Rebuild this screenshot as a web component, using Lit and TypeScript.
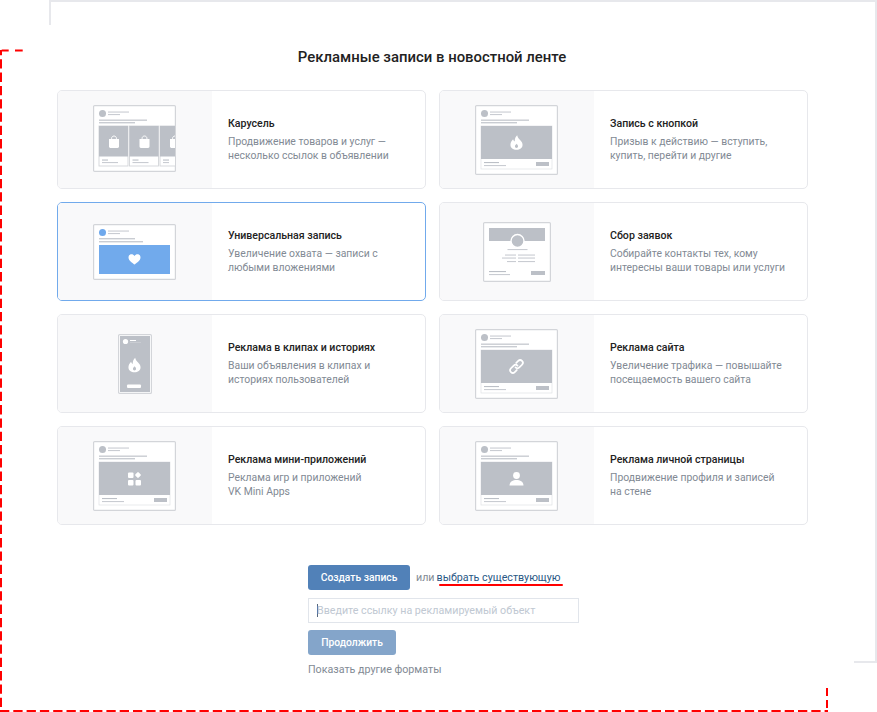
import { LitElement, html, css, svg } from "lit";
import { customElement } from "lit/decorators.js";

const G = "#bcc0c7";
const L = "#c9ccd2";
const B = "#d3d5d9";
const flame = (x: number, y: number, s = 1.12) => svg`<path transform="translate(${x} ${y}) scale(${s})" fill="#fff" fill-rule="evenodd" d="M0.6 -6.5C1 -4.5 2 -3.6 3.2 -2.3C4.6 -0.9 5.4 0.4 5.4 2C5.4 4.9 3 6.5 0 6.5C-3 6.5 -5.4 4.9 -5.4 2C-5.4 0 -4.4 -1.6 -3 -3C-2.8 -2 -2.4 -1.4 -1.6 -1C-1.6 -3.4 -0.8 -5.2 0.6 -6.5ZM0.2 1.2C-0.7 2 -1.4 2.700 -1.4 3.500C-1.4 4.300 -0.7 4.800 0 4.800C0.7 4.800 1.400 4.300 1.400 3.500C1.400 2.700 0.8 2 0.2 1.2Z"/>`;
const heart = (x: number, y: number) => svg`<path transform="translate(${x} ${y})" fill="#fff" d="M0 5.4C-1 4.7 -6 1.8 -6 -1.6C-6 -3.5 -4.6 -4.7 -3 -4.7C-1.8 -4.7 -0.7 -4.1 0 -3C0.7 -4.1 1.8 -4.7 3 -4.7C4.6 -4.7 6 -3.5 6 -1.6C6 1.8 1 4.7 0 5.4Z"/>`;
const link = (x: number, y: number) => svg`<g transform="translate(${x} ${y}) rotate(-45) scale(.92)" fill="none" stroke="#fff" stroke-width="1.900" stroke-linecap="round"><path d="M-2.500 2.900H-5.600A2.900 2.900 0 0 1 -5.600 -2.900H-1.400A2.900 2.900 0 0 1 1.500 0"/><path d="M2.500 -2.900H5.600A2.900 2.900 0 0 1 5.600 2.900H1.400A2.900 2.900 0 0 1 -1.500 0"/></g>`;
const apps = (x: number, y: number) => svg`<g transform="translate(${x} ${y + 0.5})" fill="#fff"><rect x="-6.5" y="-6.5" width="5.5" height="5.5" rx="1"/><rect x="1" y="1" width="5.5" height="5.5" rx="1"/><rect x="-6.5" y="1" width="5.5" height="5.5" rx="1"/><rect x="1.2" y="-6.3" width="4.6" height="4.6" rx="1" transform="rotate(45 3.5 -4)"/></g>`;
const person = (x: number, y: number) => svg`<g transform="translate(${x} ${y + 0.5})" fill="#fff"><circle cx="0" cy="-3.5" r="3.4"/><path d="M-7 6.5C-7 2.6 -3.4 1 0 1C3.4 1 7 2.6 7 6.5Z"/></g>`;
const bag = (x: number, y: number) => svg`<g transform="translate(${x} ${y})"><path fill="#fff" d="M-5 -3H5V4.6C5 5.4 4.4 6 3.6 6H-3.6C-4.4 6 -5 5.4 -5 4.6Z"/><path fill="none" stroke="#fff" d="M-2.4 -2.5V-3.8C-2.4 -5 -1.3 -6 0 -6C1.3 -6 2.4 -5 2.4 -3.8V-2.5"/></g>`;

const frame = (w: number, h: number) => svg`<rect x="0.6" y="0.6" width="${w - 1.2}" height="${h - 1.2}" rx="1" fill="#fff" stroke="${B}" stroke-width="1.2"/>`;
const head = (c = G) => svg`<circle cx="9.5" cy="8.5" r="3.5" fill="${c}"/><rect x="15" y="6.5" width="21" height="1.1" fill="${L}"/><rect x="15" y="9" width="12" height="1.1" fill="${L}"/><rect x="6" y="14.500" width="48" height="1.4" fill="${L}"/><rect x="6" y="17" width="36" height="1.4" fill="${L}"/>`;
const post = (icon: (x: number, y: number) => unknown) => svg`<svg width="83" height="70" viewBox="0 0 83 70">${frame(83, 70)}${head()}
  <rect x="6" y="21" width="71" height="43" fill="#fff" stroke="#dfe1e4" stroke-width=".7"/>
  <rect x="6" y="21" width="71" height="33" fill="${G}"/>${icon(41.5, 37.5)}
  <rect x="9" y="57" width="15" height="1.1" fill="${G}"/><rect x="9" y="60" width="22" height="1.1" fill="${L}"/><rect x="61" y="57" width="13" height="4" fill="${G}"/></svg>`;

const carousel = svg`<svg class="high" width="83" height="67" viewBox="0 0 83 67">${frame(83, 67)}${head()}
  ${[6, 36.5, 67].map((x, i) => svg`<rect x="${x}" y="21" width="${i == 2 ? 17 : 29}" height="40" fill="#fff" stroke="${B}" stroke-width=".9"/><rect x="${x}" y="21" width="${i == 2 ? 17 : 29}" height="30.500" fill="${G}"/>${bag(x + 15, 37)}<rect x="${x + 3}" y="54.5" width="6" height="1.1" fill="${G}"/><rect x="${x + 3}" y="57" width="${i == 2 ? 6 : 16}" height="1.1" fill="${L}"/>`)}
  <rect x="82" y="20" width="1" height="42" fill="${B}"/></svg>`;
const universal = svg`<svg class="low" width="83" height="56" viewBox="0 0 83 56">${frame(83, 56)}
  <circle cx="9.5" cy="8.5" r="3.5" fill="#6ea8ec"/><rect x="15" y="6.5" width="21" height="1.1" fill="${L}"/><rect x="15" y="9" width="12" height="1.1" fill="${L}"/><rect x="6" y="14" width="36" height="1.4" fill="${L}"/><rect x="6" y="17" width="44" height="1.4" fill="${L}"/>
  <rect x="6" y="21" width="71" height="29" fill="#71aaec"/>${heart(41.5, 35)}</svg>`;
const stories = svg`<svg width="34" height="60" viewBox="0 0 34 60">${frame(34, 60)}<rect x="2" y="2" width="30" height="56" fill="${G}"/>
  <circle cx="7.5" cy="7.5" r="2.6" fill="#fff"/><rect x="12" y="6" width="6" height="1" fill="#fff"/><rect x="12" y="8" width="11" height="1" fill="${L}"/>
  ${flame(16.5, 31)}<rect x="9" y="50.5" width="14" height="3.5" rx="1" fill="#fff"/></svg>`;
const lead = svg`<svg width="68" height="60" viewBox="0 0 68 60">${frame(68, 60)}<rect x="6" y="6" width="56" height="13" fill="${G}"/>
  <circle cx="34.5" cy="19" r="6.5" fill="${G}" stroke="#fff" stroke-width="1.4"/>
  <rect x="24.500" y="27" width="20" height="1.1" fill="${L}"/>
  <rect x="22" y="32.500" width="11" height="1.1" fill="${L}"/><rect x="35" y="32.500" width="17" height="1.1" fill="${L}"/>
  <rect x="19" y="35.500" width="14" height="1.1" fill="${L}"/><rect x="35" y="35.500" width="17" height="1.1" fill="${L}"/>
  <rect x="24" y="39" width="9" height="1.1" fill="${L}"/><rect x="35" y="39" width="17" height="1.1" fill="${L}"/>
  <rect x="6" y="49" width="17" height="1.1" fill="${G}"/><rect x="6" y="52" width="21" height="1.1" fill="${L}"/><rect x="48" y="49" width="14" height="4" fill="${G}"/></svg>`;

const cards = [
  { t: "Карусель", d: ["Продвижение товаров и услуг —", "несколько ссылок в объявлении"], i: carousel },
  { t: "Запись с кнопкой", d: ["Призыв к действию — вступить,", "купить, перейти и другие"], i: post(flame) },
  { t: "Универсальная запись", d: ["Увеличение охвата — записи с", "любыми вложениями"], i: universal, on: true },
  { t: "Сбор заявок", d: ["Собирайте контакты тех, кому", "интересны ваши товары или услуги"], i: lead },
  { t: "Реклама в клипах и историях", d: ["Ваши объявления в клипах и", "историях пользователей"], i: stories },
  { t: "Реклама сайта", d: ["Увеличение трафика — повышайте", "посещаемость вашего сайта"], i: post(link) },
  { t: "Реклама мини-приложений", d: ["Реклама игр и приложений", "VK Mini Apps"], i: post(apps) },
  { t: "Реклама личной страницы", d: ["Продвижение профиля и записей", "на стене"], i: post(person) },
];

@customElement("app-root")
export class AppRoot extends LitElement {
  static styles = css`
    :host { display: block; font-family: Roboto, "Liberation Sans", sans-serif; }
    .page { position: relative; width: 877px; height: 712px; overflow: hidden; background: #fff; box-sizing: border-box; padding: 47px 0 0 57px; }
    h1 { margin: 0 0 23px; width: 750px; text-align: center; font-size: 14.900px; line-height: 20px; font-weight: 500; color: #222; }
    .grid { display: grid; grid-template-columns: 369px 369px; column-gap: 13px; row-gap: 13px; width: 751px; }
    .card { display: flex; height: 99px; box-sizing: border-box; border: 1px solid #e7e8ec; border-radius: 5px; overflow: hidden; background: #fff; }
    .card.on { border-color: #71aaec; }
    .thumb { width: 154px; flex: none; background: #f9f9fa; display: flex; align-items: center; justify-content: center; padding-right: 1px; box-sizing: border-box; }
    .thumb svg { display: block; }
    .thumb svg.high { margin-bottom: 2px; }
    .thumb svg.low { margin-top: 1px; }
    .body { padding: 0 0 0 16px; display: flex; flex-direction: column; justify-content: center; }
    .title { font-size: 10.600px; line-height: 14px; font-weight: 500; color: #222; margin-bottom: 4px; }
    .desc { font-size: 10.400px; line-height: 13.500px; color: #828a94; }
    .actions { margin: 40px 0 0 251px; display: flex; flex-direction: column; align-items: flex-start; }
    .row { display: flex; align-items: center; height: 25px; font-size: 10.700px; color: #828a94; }
    .btn { box-sizing: border-box; height: 25px; display: flex; align-items: center; justify-content: center; border-radius: 3px; background: #5181b8; color: #fff; font-size: 10.300px; font-weight: 500; border: 0; font-family: inherit; padding: 0; }
    .create { width: 102px; margin-right: 6px; }
    .or { margin-right: 3px; }
    .pick { color: #2a5885; position: relative; margin-left: -1px; }
    .pick::after { content: ""; position: absolute; left: 2px; right: -2px; bottom: -2px; height: 2px; background: #f00; border-radius: 1px; }
    .input { box-sizing: border-box; margin-top: 8px; width: 271px; height: 25px; border: 1px solid #e1e5eb; display: flex; align-items: center; padding-left: 8px; color: #c0c8d2; font-size: 10.700px; }
    .caret { width: 1px; height: 13px; background: #55677d; margin-right: -1px; }
    .next { margin-top: 7px; width: 88px; background: #84a5ca; }
    .more { margin-top: 7px; font-size: 10.700px; line-height: 16px; color: #828a94; }
    .edge { position: absolute; background: #e7e8ec; }
    .e1 { left: 49px; right: 0; top: 0; height: 2px; }
    .e2 { left: 49px; top: 0; width: 2px; height: 25px; }
    .e3 { right: 0; top: 0; width: 2px; height: 663px; }
    .e4 { left: 854px; right: 0; top: 661px; height: 2px; }
    .dash { position: absolute; inset: 0; pointer-events: none; }
    .dash path { fill: none; stroke: #f00; stroke-width: 2; }
  `;

  render() {
    return html`<div class="page">
      <h1>Рекламные записи в новостной ленте</h1>
      <div class="grid">
        ${cards.map((c) => html`<div class="card ${c.on ? "on" : ""}">
          <div class="thumb">${c.i}</div>
          <div class="body">
            <div class="title">${c.t}</div>
            <div class="desc">${c.d[0]}<br />${c.d[1]}</div>
          </div>
        </div>`)}
      </div>
      <div class="actions">
        <div class="row">
          <button class="btn create">Создать запись</button>
          <span class="or">или</span>
          <span class="pick">выбрать существующую</span>
        </div>
        <div class="input"><span class="caret"></span>Введите ссылку на рекламируемый объект</div>
        <button class="btn next">Продолжить</button>
        <div class="more">Показать другие форматы</div>
      </div>
      <div class="edge e1"></div><div class="edge e2"></div><div class="edge e3"></div><div class="edge e4"></div>
      <svg class="dash" width="877" height="712" viewBox="0 0 877 712">
        <path d="M22.700 50.500H1.700" stroke-dasharray="7.700 6.300"/>
        <path d="M1 50V711" stroke-dasharray="9.300 4" stroke-dashoffset="4"/>
        <path d="M0 711H828" stroke-dasharray="9.300 4"/>
        <path d="M827 688V711" stroke-dasharray="8 4"/>
      </svg>
    </div>`;
  }
}
